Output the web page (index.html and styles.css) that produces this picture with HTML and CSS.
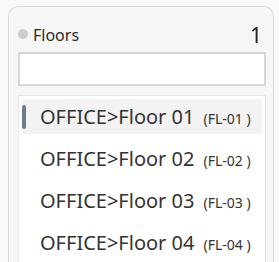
FILE: index.html
```html
<!DOCTYPE html>
<html>
<head>
<meta charset="utf-8">
<link rel="stylesheet" href="styles.css">
</head>
<body>
<div class="card">
  <div class="header">
    <span class="dot"></span>
    <span class="title">Floors</span>
    <span class="count">1</span>
  </div>
  <input class="search" type="text">
  <ul class="list">
    <li class="item selected"><span class="name">OFFICE&gt;Floor 01</span><span class="code">(FL-01 )</span></li>
    <li class="item"><span class="name">OFFICE&gt;Floor 02</span><span class="code">(FL-02 )</span></li>
    <li class="item"><span class="name">OFFICE&gt;Floor 03</span><span class="code">(FL-03 )</span></li>
    <li class="item"><span class="name">OFFICE&gt;Floor 04</span><span class="code">(FL-04 )</span></li>
  </ul>
</div>
</body>
</html>
```

FILE: styles.css
```css
html, body {
  margin: 0;
  padding: 0;
  background: #f9f9f9;
  overflow: hidden;
}
body {
  font-family: "Noto Sans", "Open Sans", sans-serif;
  color: #333;
  padding: 6px 5px 0 8px;
  height: 262px;
  box-sizing: border-box;
}
.card {
  display: flex;
  flex-direction: column;
  background: #f6f6f6;
  border: 1.5px solid #d9d9d9;
  border-bottom: none;
  border-radius: 10px 10px 0 0;
  padding: 16px 7px 0 9px;
  height: 256px;
  box-sizing: border-box;
  overflow: hidden;
}
.header {
  display: flex;
  align-items: center;
  height: 24px;
  flex: none;
}
.dot {
  width: 10px;
  height: 10px;
  border-radius: 50%;
  background: #cdcdcd;
  margin-right: 5px;
  margin-top: -2px;
}
.title {
  font-size: 16px;
  flex: 1;
  color: #2b2b2b;
}
.count {
  font-size: 21px;
  margin-right: 4px;
  color: #222;
}
.search {
  display: block;
  flex: none;
  width: 100%;
  height: 34px;
  box-sizing: border-box;
  border: 2px solid #d7d7d7;
  background: #fff;
  margin: 5px 0 0 0;
  outline: none;
}
.list {
  flex: 1;
  min-height: 0;
  overflow: hidden;
  list-style: none;
  margin: 9px 0 0 0;
  padding: 3px 3px 0 3px;
  background: #fff;
  border: 1px solid #e6e6e6;
  border-bottom: none;
}
.item {
  position: relative;
  display: flex;
  align-items: baseline;
  height: 35px;
  padding-left: 18px;
  margin-bottom: 7px;
  line-height: 35px;
}
.item.selected {
  background: #f3f3f3;
}
.item.selected::before {
  content: "";
  position: absolute;
  left: 0;
  top: 6px;
  width: 4px;
  height: 24px;
  border-radius: 2px;
  background: #6c7d8d;
}
.name {
  font-size: 20px;
  color: #333;
}
.code {
  font-size: 14px;
  margin-left: 9px;
  color: #333;
}
```
